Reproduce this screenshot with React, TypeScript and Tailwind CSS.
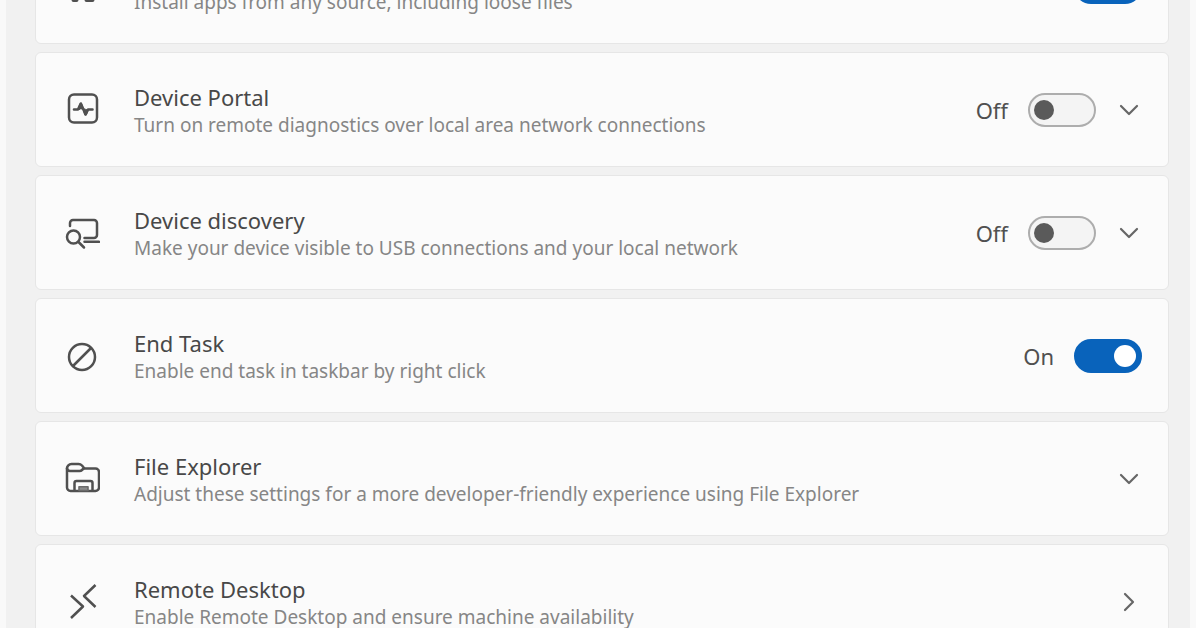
import { useState } from "react";
import type { ReactNode } from "react";

type TSetting = {
  id: string;
  title: string;
  description: string;
  icon: ReactNode;
  enabled?: boolean;
  action?: "expand" | "open";
};

function Icon({ children }: { children: ReactNode }) {
  return (
    <svg
      viewBox="0 0 36 36"
      className="size-9 shrink-0"
      fill="none"
      stroke="#505050"
      strokeWidth="2.5"
      strokeLinecap="round"
      strokeLinejoin="round"
      aria-hidden="true"
    >
      {children}
    </svg>
  );
}

const settings: TSetting[] = [
  {
    id: "developer-mode",
    title: "Developer Mode",
    description: "Install apps from any source, including loose files",
    enabled: true,
    icon: (
      <Icon>
        <path d="M9 4 27 29M27 4 10 29" />
        <path d="M9.500 31h3M22.500 31h6" strokeWidth="4" />
      </Icon>
    ),
  },
  {
    id: "device-portal",
    title: "Device Portal",
    description: "Turn on remote diagnostics over local area network connections",
    enabled: false,
    action: "expand",
    icon: (
      <Icon>
        <rect x="5" y="2.500" width="28" height="28" rx="5" />
        <path d="M10 17.500h4l2.800-6 4.800 11 2.400-5H28.500" strokeWidth="2.600" />
        <path d="M15.300 16.500l1.500-4 1.200 3.500M20.500 18l1.100 4 1.400-3.500" strokeWidth="3" />
      </Icon>
    ),
  },
  {
    id: "device-discovery",
    title: "Device discovery",
    description: "Make your device visible to USB connections and your local network",
    enabled: false,
    action: "expand",
    icon: (
      <Icon>
        <path d="M6 11V8a3 3 0 0 1 3-3h21a3 3 0 0 1 3 3v12a3 3 0 0 1-3 3H20.500" />
        <path d="M20.500 26.800H35" />
        <circle cx="9.500" cy="22" r="6.500" />
        <path d="m14.500 27 5.500 5.500" />
      </Icon>
    ),
  },
  {
    id: "end-task",
    title: "End Task",
    description: "Enable end task in taskbar by right click",
    enabled: true,
    icon: (
      <Icon>
        <circle cx="18" cy="19" r="13" />
        <path d="M9 28 27 10" />
      </Icon>
    ),
  },
  {
    id: "file-explorer",
    title: "File Explorer",
    description: "Adjust these settings for a more developer-friendly experience using File Explorer",
    action: "expand",
    icon: (
      <Icon>
        <path d="M3 7v19.500A3.500 3.500 0 0 0 6.500 30h25a3.500 3.500 0 0 0 3.500-3.500V11a3.500 3.500 0 0 0-3.500-3.500H20" />
        <path d="M3 7.500A4.500 4.500 0 0 1 7.500 3h7a5 5 0 0 1 3.500 1.500l2 2.500-2 2a3.500 3.500 0 0 1-2.500 1H6a3 3 0 0 1-3-2.500Z" />
        <path d="M10.500 29.500V22a2 2 0 0 1 2-2h14a2 2 0 0 1 2 2v7.500" />
        <path d="M15 25.800h9v3.700h-9z" fill="#8c8c8c" stroke="#6b6b6b" strokeWidth="1.600" />
      </Icon>
    ),
  },
  {
    id: "remote-desktop",
    title: "Remote Desktop",
    description: "Enable Remote Desktop and ensure machine availability",
    action: "open",
    icon: (
      <Icon>
        <path d="M7 11.500 19 22.500 7 34" strokeLinecap="butt" />
        <path d="M31.500 1 20 12l11.500 11" strokeLinecap="butt" />
      </Icon>
    ),
  },
];

function Chevron({ d }: { d: string }) {
  return (
    <svg
      viewBox="0 0 26 26"
      className="size-[26px]"
      fill="none"
      stroke="#666666"
      strokeWidth="2.2"
      strokeLinecap="round"
      strokeLinejoin="round"
      aria-hidden="true"
    >
      <path d={d} />
    </svg>
  );
}

function Toggle({ id, defaultOn }: { id: string; defaultOn: boolean }) {
  const [on, setOn] = useState(defaultOn);

  return (
    <div className="flex items-center gap-5">
      <span className="text-[22px] leading-7 text-[#505050]">{on ? "On" : "Off"}</span>
      <input
        id={id}
        type="checkbox"
        role="switch"
        checked={on}
        onChange={(e) => setOn(e.target.checked)}
        className="flex h-[34px] w-[68px] appearance-none items-center rounded-full border-2 border-[#adadad] bg-[#f4f4f4] px-1 before:size-5 before:rounded-full before:bg-[#5a5a5a] checked:justify-end checked:border-[#0963bb] checked:bg-[#0963bb] checked:before:size-[22px] checked:before:bg-white"
      />
    </div>
  );
}

function SettingCard({ setting }: { setting: TSetting }) {
  const { id, title, description, icon, enabled, action } = setting;

  return (
    <li className="flex h-[115px] shrink-0 items-center gap-[34px] rounded-md border border-[#e6e6e6] bg-[#fbfbfb] pr-[26px] pl-7">
      {icon}
      <div className="min-w-0 flex-1 pt-0.5">
        <label htmlFor={id} className="block text-[22px] leading-7 text-[#484848]">
          {title}
        </label>
        <p className="text-[19px] leading-7 text-[#868686]">{description}</p>
      </div>
      <div className="flex shrink-0 items-center gap-5">
        {enabled !== undefined && <Toggle id={id} defaultOn={enabled} />}
        {action === "expand" && (
          <button id={enabled === undefined ? id : undefined} type="button" aria-label={title}>
            <Chevron d="m5 9 8 8 8-8" />
          </button>
        )}
        {action === "open" && (
          <a id={id} href="#remote-desktop" aria-label={title}>
            <Chevron d="m9 5 8 8-8 8" />
          </a>
        )}
      </div>
    </li>
  );
}

export default function App() {
  return (
    <div className="h-screen overflow-hidden bg-[#f9f9f9] px-[6px] font-['Noto_Sans','Open_Sans',sans-serif]">
      <main className="h-full overflow-hidden bg-[#f1f1f1] pr-[21px] pl-[29px]">
        {/* list is scrolled part of the way down */}
        <ul className="-mt-[71px] flex flex-col gap-2">
          {settings.map((setting) => (
            <SettingCard key={setting.id} setting={setting} />
          ))}
        </ul>
      </main>
    </div>
  );
}
